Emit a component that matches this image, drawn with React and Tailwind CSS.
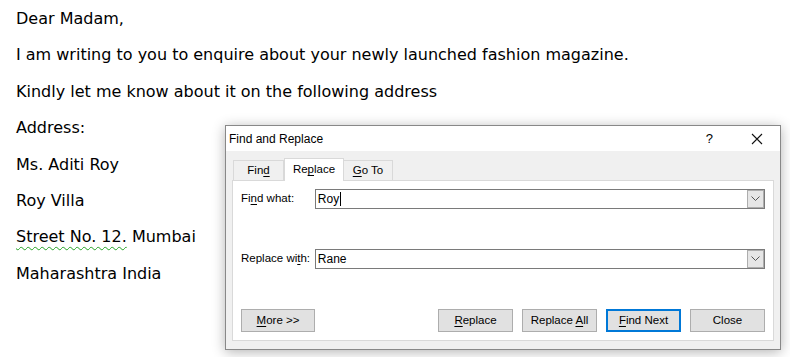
import React from "react";

const U = ({ children }) => <span className="underline underline-offset-2">{children}</span>;

function Chevron() {
  return (
    <svg width="9" height="6" viewBox="0 0 9 6" className="block">
      <path d="M0.5 0.5 L4.5 4.5 L8.5 0.5" fill="none" stroke="#555" strokeWidth="1" />
    </svg>
  );
}

function Field({ value, caret }) {
  return (
    <div className="flex h-[20px] w-[451px] items-stretch border border-[#7a7a7a] bg-white">
      <div className="flex flex-1 items-center pl-[2px] text-[12px] text-black">
        <span>{value}</span>
        {caret && <span className="ml-[1px] inline-block h-[14px] w-px bg-black" />}
      </div>
      <div className="flex w-[17px] items-center justify-center border border-[#adadad] bg-[#e6e6e6]">
        <Chevron />
      </div>
    </div>
  );
}

function Btn({ children, primary, w = "w-[75px]" }) {
  return (
    <div
      className={`flex h-[23px] ${w} items-center justify-center bg-[#e1e1e1] text-[11.5px] text-black ${
        primary ? "border-2 border-[#0078d7]" : "border border-[#adadad]"
      }`}
    >
      <span>{children}</span>
    </div>
  );
}

export default function App() {
  const lines = [
    "Dear Madam,",
    "I am writing to you to enquire about your newly launched fashion magazine.",
    "Kindly let me know about it on the following address",
    "Address:",
    "Ms. Aditi Roy",
    "Roy Villa",
    null,
    "Maharashtra India",
  ];
  return (
    <div className="relative h-[357px] w-[790px] overflow-hidden bg-white">
      <div
        className="pl-[16px] pt-px text-[16px] leading-[36.4px] text-black"
        style={{ fontFamily: "'DejaVu Sans', sans-serif" }}
      >
        {lines.map((l, i) =>
          l === null ? (
            <div key={i}>
              <span className="underline decoration-wavy decoration-[#22a022] decoration-1 underline-offset-4">
                Street No. 12.
              </span>{" "}
              Mumbai
            </div>
          ) : (
            <div key={i}>{l}</div>
          )
        )}
      </div>

      <div
        className="absolute left-[225px] top-[125px] flex h-[225px] w-[556px] flex-col border border-[#888] bg-[#f0f0f0] shadow-[0_2px_12px_rgba(0,0,0,0.3)]"
        style={{ fontFamily: "'Liberation Sans', Arial, sans-serif" }}
      >
        <div className="flex h-[25px] items-center bg-white pl-[3px] text-[12px] text-black">
          <span className="flex-1">Find and Replace</span>
          <span className="mr-[38px] text-[13px]">?</span>
          <svg width="12" height="12" viewBox="0 0 12 12" className="mr-[17px]">
            <path d="M1 1 L11 11 M11 1 L1 11" stroke="#111" strokeWidth="1.1" />
          </svg>
        </div>

        <div className="mt-[7px] flex pl-[7px] text-[11.5px] text-black">
          <div className="mt-[2px] flex h-[20px] w-[51px] items-center justify-center border border-b-0 border-[#d9d9d9] bg-[#f0f0f0]">
            <span>
              Fin<U>d</U>
            </span>
          </div>
          <div className="relative z-10 -mb-px flex h-[23px] w-[60px] items-center justify-center border border-b-0 border-[#d9d9d9] bg-white">
            <span>
              Re<U>p</U>lace
            </span>
          </div>
          <div className="mt-[2px] flex h-[20px] w-[49px] items-center justify-center border border-b-0 border-l-0 border-[#d9d9d9] bg-[#f0f0f0]">
            <span>
              <U>G</U>o To
            </span>
          </div>
        </div>

        <div className="mx-[6px] flex h-[161px] flex-col border border-[#d9d9d9] bg-white px-[8px] text-[11.5px] text-black">
          <div className="mt-[8px] flex items-center">
            <span className="w-[74px]">
              Fi<U>n</U>d what:
            </span>
            <Field value="Roy" caret />
          </div>
          <div className="mt-[40px] flex items-center">
            <span className="w-[74px]">
              Replace wi<U>t</U>h:
            </span>
            <Field value="Rane" />
          </div>
          <div className="mt-[40px] flex">
            <Btn w="w-[74px]">
              <U>M</U>ore &gt;&gt;
            </Btn>
            <div className="ml-auto flex gap-[9px]">
              <Btn>
                <U>R</U>eplace
              </Btn>
              <Btn>
                Replace <U>A</U>ll
              </Btn>
              <Btn primary>
                <U>F</U>ind Next
              </Btn>
              <Btn>Close</Btn>
            </div>
          </div>
        </div>
      </div>
    </div>
  );
}
